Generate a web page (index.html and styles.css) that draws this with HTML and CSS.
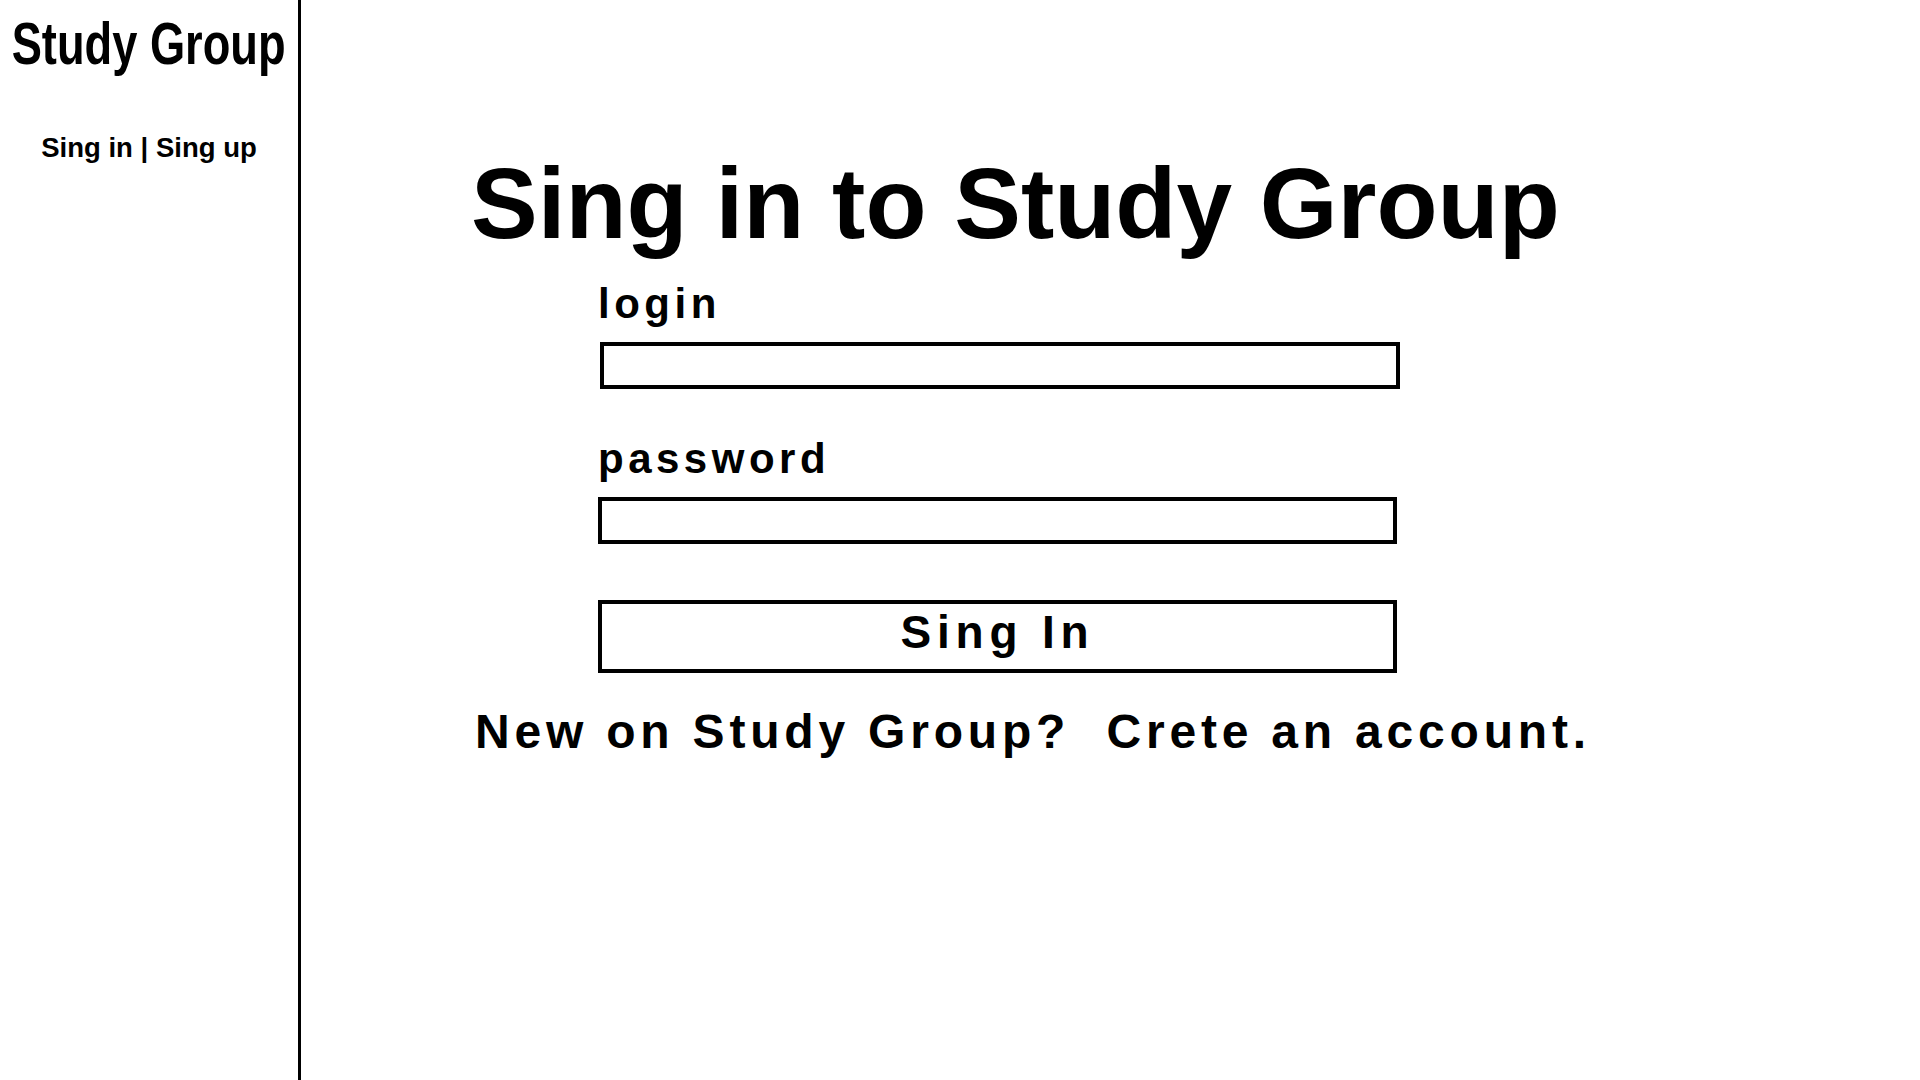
FILE: index.html
```html
<!DOCTYPE html>
<html lang="en">
<head>
<meta charset="utf-8">
<title>Study Group - Sign in</title>
<link rel="stylesheet" href="styles.css">
</head>
<body>
<div class="page">
  <aside class="sidebar">
    <div class="brand"><span class="brand-text">Study Group</span></div>
    <nav class="auth-links"><a href="#">Sing in</a> | <a href="#">Sing up</a></nav>
  </aside>
  <main class="main">
    <h1 class="title">Sing in to Study Group</h1>
    <form class="form">
      <label class="label" for="login">login</label>
      <input class="field field-login" id="login" type="text">
      <label class="label label-password" for="password">password</label>
      <input class="field" id="password" type="password">
      <button class="submit" type="button">Sing In</button>
    </form>
    <p class="signup">New on Study Group?&nbsp; Crete an account.</p>
  </main>
</div>
</body>
</html>
```

FILE: styles.css
```css
html, body {
  margin: 0;
  padding: 0;
  background: #fff;
}

body {
  font-family: "Liberation Sans", Arial, sans-serif;
  font-weight: bold;
  color: #000;
}

.page {
  display: flex;
  min-height: 100vh;
}

.sidebar {
  width: 298px;
  flex: 0 0 298px;
  border-right: 3px solid #000;
  display: flex;
  flex-direction: column;
  align-items: center;
}

.brand {
  margin-top: 14px;
  height: 60px;
  width: 298px;
  display: flex;
  justify-content: center;
}

.brand-text {
  font-size: 60px;
  line-height: 60px;
  white-space: nowrap;
  display: inline-block;
  transform: scaleX(0.754);
  transform-origin: center;
}

.auth-links {
  margin-top: 58px;
  font-size: 27.5px;
  line-height: 32px;
  white-space: nowrap;
}

.auth-links a {
  color: #000;
  text-decoration: none;
}

.main {
  flex: 1;
  padding-left: 170px;
}

.title {
  margin: 153px 0 0 0;
  font-size: 100px;
  line-height: 100px;
  font-weight: bold;
  white-space: nowrap;
}

.form {
  margin: 26px 0 0 127px;
  width: 800px;
  display: flex;
  flex-direction: column;
  align-items: flex-start;
}

.label {
  display: block;
  font-size: 42px;
  line-height: 48px;
  letter-spacing: 4.5px;
  padding-top: 1px;
}

.label-password {
  margin-top: 45px;
}

.field {
  box-sizing: border-box;
  display: block;
  margin-top: 14px;
  width: 799px;
  height: 47px;
  border: 4px solid #000;
  border-radius: 0;
  background: #fff;
  outline: none;
  padding: 0 8px;
  font-family: inherit;
  font-size: 24px;
}

.field-login {
  margin-left: 2px;
  width: 800px;
}

.submit {
  box-sizing: border-box;
  margin-top: 56px;
  width: 799px;
  height: 73px;
  border: 4px solid #000;
  border-radius: 0;
  background: #fff;
  color: #000;
  padding: 0 0 9px 0;
  font-family: inherit;
  font-weight: bold;
  font-size: 46px;
  line-height: 56px;
  letter-spacing: 5.8px;
  text-align: center;
  cursor: pointer;
}

.signup {
  margin: 31px 0 0 4px;
  font-size: 48px;
  line-height: 56px;
  letter-spacing: 4.8px;
  white-space: nowrap;
}
```
